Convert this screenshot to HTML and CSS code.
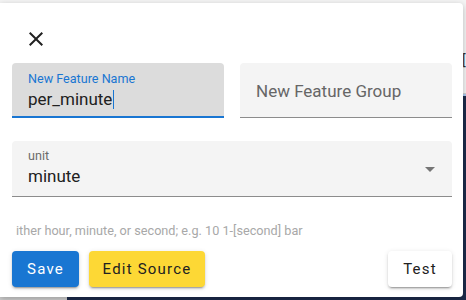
FILE: index.html
```html
<!DOCTYPE html>
<html>

<head>
    <title>New Feature</title>
    <link rel="stylesheet" href="styles.css">
</head>

<body>
    <div class="backdrop">
        <div class="backdrop-top">
            <span class="backdrop-glyph">[</span>
        </div>
        <div class="backdrop-accent"></div>
        <div class="backdrop-bottom">
            <div class="backdrop-tab"></div>
        </div>
    </div>

    <div class="dialog">
        <div class="dialog-head">
            <button type="button" class="icon-button" aria-label="close">
                <svg width="24" height="24" viewBox="0 0 24 24">
                    <path d="M19 6.41 17.59 5 12 10.59 6.41 5 5 6.41 10.59 12 5 17.59 6.41 19 12 13.41 17.59 19 19 17.59 13.41 12z" fill="#212121"></path>
                </svg>
            </button>
        </div>

        <div class="field-row">
            <div class="field focused">
                <label class="field-label">New Feature Name</label>
                <div class="field-value">per_minute<span class="caret"></span></div>
            </div>
            <div class="field empty">
                <div class="field-placeholder">New Feature Group</div>
            </div>
        </div>

        <div class="field select">
            <label class="field-label">unit</label>
            <div class="field-value">minute</div>
            <svg class="select-arrow" width="24" height="24" viewBox="0 0 24 24">
                <path d="M7 10l5 5 5-5z" fill="#757575"></path>
            </svg>
        </div>

        <p class="helper">ither hour, minute, or second; e.g. 10 1-[second] bar</p>

        <div class="actions">
            <button type="button" class="btn btn-primary">Save</button>
            <button type="button" class="btn btn-yellow">Edit Source</button>
            <span class="spacer"></span>
            <button type="button" class="btn btn-white">Test</button>
        </div>
    </div>
</body>

</html>
```

FILE: styles.css
```css
body {
    margin: 0;
    width: 466px;
    height: 300px;
    overflow: hidden;
    font-family: Roboto, "Liberation Sans", sans-serif;
    background: #1c2b4b;
}

/* page behind the dialog */
.backdrop {
    height: 300px;
    display: flex;
    flex-direction: column;
}

.backdrop-top {
    height: 93px;
    background: #f4f4f4;
    border-bottom: 1px solid #d0d0d0;
    position: relative;
}

.backdrop-glyph {
    position: absolute;
    left: 462px;
    top: 52px;
    font-size: 14px;
    color: #333;
}

.backdrop-accent {
    height: 2px;
    background: #a9c8ee;
}

.backdrop-bottom {
    flex: 1;
    display: flex;
    align-items: flex-end;
}

.backdrop-tab {
    width: 67px;
    height: 3px;
    background: #cfcfcf;
}

/* dialog */
.dialog {
    position: absolute;
    left: 0;
    top: 3px;
    width: 463px;
    height: 294px;
    box-sizing: border-box;
    padding: 12px 11px 0 12px;
    background: #fff;
    border-radius: 0 4px 4px 0;
    box-shadow: 0 2px 6px rgba(0, 0, 0, 0.25);
}

.dialog-head {
    height: 48px;
}

.icon-button {
    width: 48px;
    height: 48px;
    padding: 12px;
    border: none;
    background: none;
    cursor: pointer;
}

.icon-button svg {
    display: block;
}

.field-row {
    display: flex;
    gap: 16px;
}

.field {
    position: relative;
    flex: 1;
    height: 55px;
    box-sizing: border-box;
    padding: 9px 16px 0 16px;
    background: #f4f4f4;
    border-radius: 4px 4px 0 0;
    border-bottom: 1px solid #8c8c8c;
}

.field.focused {
    background: #dcdcdc;
    border-bottom: 2px solid #1976d2;
}

.field-label {
    display: block;
    font-size: 12.6px;
    line-height: 14px;
    color: #6b6b6b;
}

.focused .field-label {
    color: #1976d2;
}

.field-value {
    margin-top: 3px;
    font-size: 17px;
    line-height: 20px;
    color: #212121;
}

.caret {
    display: inline-block;
    width: 1px;
    height: 19px;
    margin-left: 1px;
    vertical-align: -4px;
    background: #1976d2;
}

.field-placeholder {
    padding-top: 9px;
    font-size: 17px;
    line-height: 20px;
    color: #666;
}

.field.select {
    margin-top: 23px;
    height: 56px;
    padding-top: 8px;
}

.select .field-value {
    margin-top: 3px;
}

.select-arrow {
    position: absolute;
    right: 10px;
    top: 16px;
}

.helper {
    margin: 27px 0 0 4px;
    font-size: 12.7px;
    line-height: 14px;
    color: #a8a8a8;
}

.actions {
    display: flex;
    align-items: center;
    gap: 10px;
    margin-top: 13px;
}

.spacer {
    flex: 1;
}

.btn {
    height: 36px;
    padding: 0;
    border: none;
    border-radius: 4px;
    font-family: Roboto, "Liberation Sans", sans-serif;
    font-size: 15px;
    font-weight: 400;
    letter-spacing: 0.08em;
    white-space: nowrap;
    cursor: pointer;
    box-shadow: 0 3px 1px -2px rgba(0, 0, 0, 0.2), 0 2px 2px 0 rgba(0, 0, 0, 0.14), 0 1px 5px 0 rgba(0, 0, 0, 0.12);
}

.btn-primary {
    width: 67px;
    background: #1976d2;
    color: #fff;
}

.btn-yellow {
    width: 116px;
    background: #fdd835;
    color: #212121;
}

.btn-white {
    width: 64px;
    background: #fff;
    color: #212121;
}
```
